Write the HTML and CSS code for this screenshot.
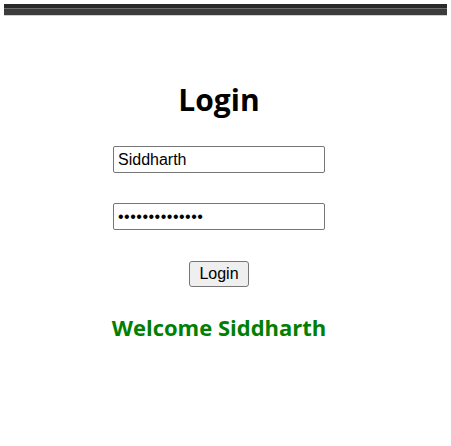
FILE: index.html
```html
<!DOCTYPE html>
<html>
<head>
<meta charset="utf-8">
<link rel="stylesheet" href="styles.css">
</head>
<body>
<div class="topbar"><div class="topbar-dark"></div><div class="topbar-line"></div><div class="topbar-mid"></div><div class="topbar-edge"></div></div>
<main class="page">
  <h1 class="title">Login</h1>
  <form class="form">
    <input class="field" type="text" value="Siddharth">
    <input class="field field-pass" type="password" value="Siddharth1234!">
    <button class="btn" type="button">Login</button>
  </form>
  <h2 class="welcome">Welcome Siddharth</h2>
</main>
</body>
</html>
```
FILE: styles.css
```css
html, body { margin: 0; padding: 0; background: #fff; }
body { font-family: "Open Sans", "Noto Sans", sans-serif; }
.topbar { margin: 4px 4px 0 4px; display: flex; flex-direction: column; }
.topbar-dark { height: 4px; background: #2a2a2a; }
.topbar-line { height: 1px; background: #6e6e6e; }
.topbar-mid { height: 6px; background: #3c3c3c; }
.topbar-edge { height: 1px; background: #d0d0d0; }
.page { display: flex; flex-direction: column; align-items: center; padding-right: 13px; }
.title { font-size: 30px; font-weight: 700; margin: 64px 0 0 0; line-height: 40px; color: #000; }
.form { display: flex; flex-direction: column; align-items: center; gap: 30px; margin-top: 26px; }
.field { box-sizing: border-box; width: 212px; height: 27px; border: 1px solid #767676; border-radius: 2px; padding: 1px 4px; font-family: "Liberation Sans", Arial, sans-serif; font-size: 16px; color: #000; }
.field-pass { letter-spacing: 0.5px; }
.btn { box-sizing: border-box; width: 60px; height: 26px; margin-top: 1px; border: 1px solid #767676; border-radius: 3px; background: #efefef; font-family: "Liberation Sans", Arial, sans-serif; font-size: 16px; color: #000; padding: 0; }
.welcome { margin: 25px 0 0 0; font-size: 22px; font-weight: 700; color: #008000; line-height: 30px; }
```
